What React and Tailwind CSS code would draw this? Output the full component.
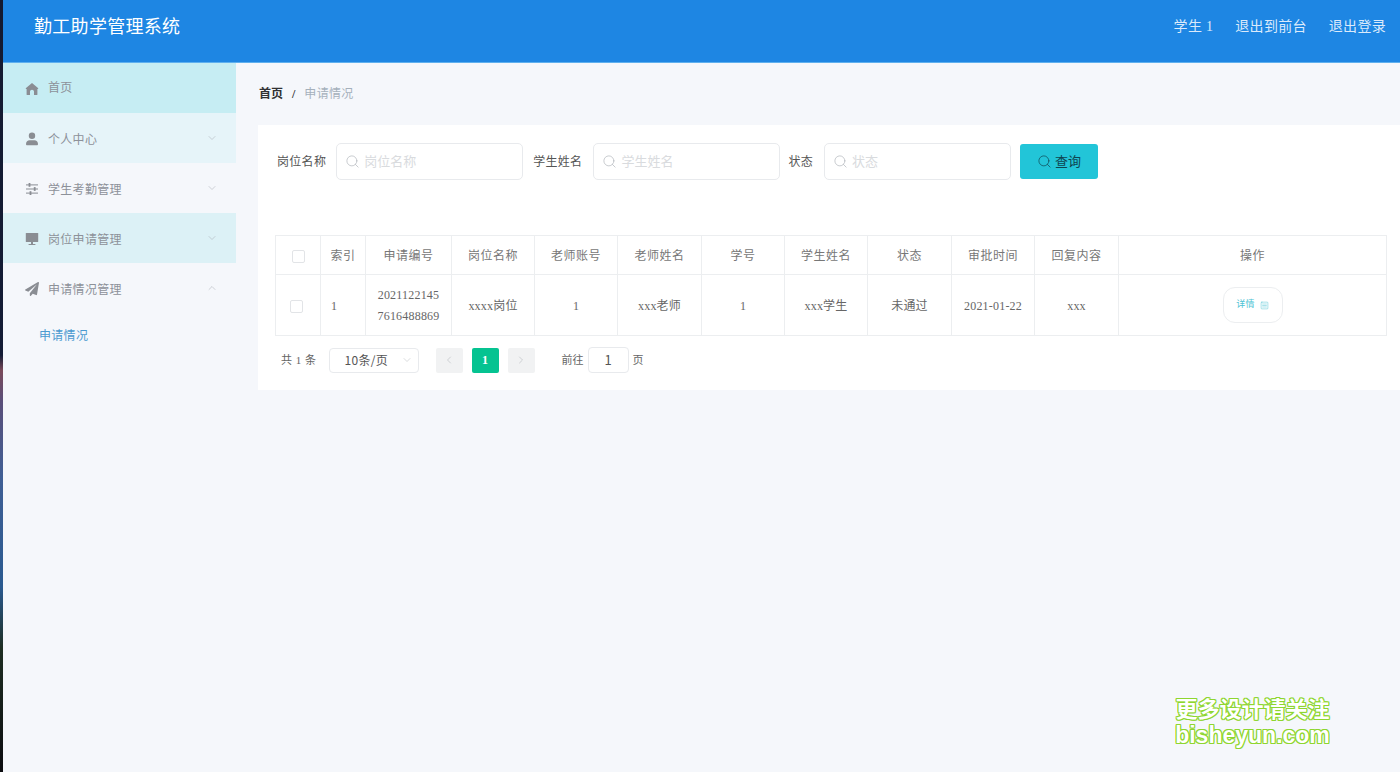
import React from "react";
import { FaPaperPlane } from "react-icons/fa";
import { ChevronDown, ChevronUp, ChevronLeft, ChevronRight, Search, SquareMenu } from "lucide-react";

const font = "font-['Liberation_Serif','Noto_Sans_CJK_SC',serif]";

const HomeIcon = (p) => (
  <svg viewBox="0 0 14 14" width="14" height="14" fill="currentColor" {...p}>
    <path d="M7 1 L13 6 C13.4 6.4 13.2 7 12.7 7 L12.4 7 L12.4 12.4 C12.4 12.8 12.1 13 11.8 13 L9 13 L9 9.6 C9 8.5 8.1 7.7 7 7.7 C5.9 7.7 5 8.5 5 9.6 L5 13 L2.2 13 C1.9 13 1.6 12.8 1.6 12.4 L1.6 7 L1.3 7 C0.8 7 0.6 6.4 1 6 Z" />
  </svg>
);
const UserIcon = (p) => (
  <svg viewBox="0 0 14 14" width="14" height="14" fill="currentColor" {...p}>
    <circle cx="7" cy="3.8" r="3.2" />
    <path d="M1 12 C1 9.6 2.6 8.2 4.6 8.2 L9.4 8.2 C11.4 8.2 13 9.6 13 12 C13 12.8 12.5 13.3 11.8 13.3 L2.2 13.3 C1.5 13.3 1 12.8 1 12 Z" />
  </svg>
);
const SliderIcon = (p) => (
  <svg viewBox="0 0 14 14" width="14" height="14" fill="currentColor" {...p}>
    <rect x="1" y="2.4" width="12" height="1" />
    <rect x="1" y="6.5" width="12" height="1" />
    <rect x="1" y="10.6" width="12" height="1" />
    <rect x="3.6" y="1" width="1.8" height="3.8" />
    <rect x="8.8" y="5.1" width="1.8" height="3.8" />
    <rect x="4.6" y="9.2" width="1.8" height="3.8" />
  </svg>
);
const DesktopIcon = (p) => (
  <svg viewBox="0 0 14 14" width="14" height="14" fill="currentColor" {...p}>
    <rect x="0.8" y="1" width="12.4" height="9" rx="0.5" />
    <rect x="6" y="10" width="2" height="2" />
    <rect x="3.6" y="12" width="6.8" height="1" />
  </svg>
);

const menu = [
  { label: "首页", Icon: HomeIcon, bg: "bg-[#c6edf3]", arrow: null, shift: "-mt-[2px]" },
  { label: "个人中心", Icon: UserIcon, bg: "bg-[#e6f4f9]", arrow: "down", shift: "pt-[2px]" },
  { label: "学生考勤管理", Icon: SliderIcon, bg: "bg-[#f5f7fb]", arrow: "down", shift: "pt-[2px]" },
  { label: "岗位申请管理", Icon: DesktopIcon, bg: "bg-[#dcf1f6]", arrow: "down", shift: "pt-[2px]" },
  { label: "申请情况管理", Icon: FaPaperPlane, bg: "bg-[#f5f7fb]", arrow: "up", shift: "pt-[2px]" },
];

const headers = [
  ["索引", "w-[45px]"],
  ["申请编号", "w-[86px]"],
  ["岗位名称", "w-[83px]"],
  ["老师账号", "w-[83px]"],
  ["老师姓名", "w-[84px]"],
  ["学号", "w-[83px]"],
  ["学生姓名", "w-[83px]"],
  ["状态", "w-[84px]"],
  ["审批时间", "w-[83px]"],
  ["回复内容", "w-[84px]"],
  ["操作", ""],
];

const cells = ["xxxx岗位", "1", "xxx老师", "1", "xxx学生", "未通过", "2021-01-22", "xxx"];

function Field({ label, placeholder, labelClass }) {
  return (
    <div className="flex items-center">
      <span className={`text-[12px] tracking-[0.3px] text-[#555] ${labelClass}`}>{label}</span>
      <div className="w-[187px] h-[37px] flex items-center rounded-[5px] border border-[#e8eaed] bg-white pl-[8px]">
        <Search size={15} strokeWidth={1} className="text-[#a9adb3]" />
        <span className="ml-[4px] text-[13px] text-[#d9dbde]">{placeholder}</span>
      </div>
    </div>
  );
}

export default function App() {
  return (
    <div className={`flex w-[1400px] h-[772px] overflow-hidden relative bg-[#f5f7fb] ${font}`}>
      <div className="w-[3px] shrink-0 bg-[linear-gradient(180deg,#141a30_0%,#141c35_46%,#7a4a5a_48%,#5a4f7a_52%,#3f5f95_62%,#2a5a90_76%,#1e2e22_84%,#0c0c10_100%)]" />
      <div className="flex-1 flex flex-col min-w-0">
        <header className="h-[63px] shrink-0 flex items-center justify-between bg-[#1e86e3] border-b border-[#5fb0ee] pl-[31px] pr-[14px] pb-[8px]">
          <div className="text-[18px] tracking-[0.3px] text-white">勤工助学管理系统</div>
          <div className="flex gap-[22px] mb-[2px] text-[14px] tracking-[0.3px] text-[#dbeafb]">
            <span>学生 1</span>
            <span>退出到前台</span>
            <span>退出登录</span>
          </div>
        </header>

        <div className="flex-1 flex min-h-0">
          <aside className="w-[233px] shrink-0 bg-[#f5f7fb]">
            {menu.map(({ label, Icon, bg, arrow, shift }) => (
              <div key={label} className={`h-[50px] pt-[2px] ${bg} flex items-center pl-[22px] pr-[18px] text-[#8d9199]`}>
                <Icon size={14} className="shrink-0 text-[#8a8d93]" />
                <span className={`ml-[9px] text-[12px] tracking-[0.3px] flex-1 ${shift}`}>{label}</span>
                {arrow === "down" && <ChevronDown size={12} strokeWidth={1} className="text-[#a5a9b0] -translate-y-px" />}
                {arrow === "up" && <ChevronUp size={12} strokeWidth={1} className="text-[#a5a9b0] -translate-y-px" />}
              </div>
            ))}
            <div className="h-[45px] flex items-center pl-[36px] text-[12px] tracking-[0.3px] text-[#4b9ad0]">申请情况</div>
          </aside>

          <main className="flex-1 min-w-0 pl-[22px]">
            <div className="h-[62px] flex items-center pl-px text-[12px]">
              <span className="font-bold text-[#303133]">首页</span>
              <span className="mx-[9px] font-bold text-[#303133]">/</span>
              <span className="text-[#a5b0bb] tracking-[0.3px]">申请情况</span>
            </div>

            <section className="h-[265px] bg-white pl-[18px] pr-[13px] pt-[18px]">
              <div className="flex items-center h-[37px]">
                <Field label="岗位名称" placeholder="岗位名称" labelClass="ml-px mr-[10px]" />
                <Field label="学生姓名" placeholder="学生姓名" labelClass="ml-[10px] mr-[11px]" />
                <Field label="状态" placeholder="状态" labelClass="ml-[8px] mr-[11px]" />
                <button className="ml-[9px] w-[78px] h-[35px] flex items-center justify-center gap-[3px] rounded-[3px] bg-[#22c5d8] text-[13px] text-[#0f4450]">
                  <Search size={15} strokeWidth={1.1} />
                  查询
                </button>
              </div>

              <table className="mt-[55px] -ml-px w-[1112px] table-fixed border-collapse border border-[#eceef0] text-[12px] tracking-[0.2px] text-[#666]">
                <thead>
                  <tr className="h-[39px]">
                    <th className="w-[45px] border border-[#eceef0] font-normal">
                      <span className="inline-block align-middle size-[13px] rounded-[2px] border border-[#e2e4e7]" />
                    </th>
                    {headers.map(([t, w]) => (
                      <th key={t} className={`${w} pt-px border border-[#eceef0] font-normal text-[#777] tracking-[0.5px]`}>{t}</th>
                    ))}
                  </tr>
                </thead>
                <tbody>
                  <tr className="h-[61px] text-center">
                    <td className="border border-[#eceef0] pr-[3px]">
                      <span className="inline-block align-middle size-[13px] rounded-[2px] border border-[#e2e4e7]" />
                    </td>
                    <td className="pt-px border border-[#eceef0] text-left pl-[10px]">1</td>
                    <td className="pt-px border border-[#eceef0] leading-[21px]">2021122145<br />7616488869</td>
                    {cells.map((c, i) => (
                      <td key={i} className="pt-px border border-[#eceef0]">{c}</td>
                    ))}
                    <td className="border border-[#eceef0]">
                      <span className="inline-flex items-center justify-center gap-[5px] w-[60px] h-[36px] rounded-[12px] border border-[#eceef0] text-[9px] text-[#4fc3d4] align-middle">
                        详情
                        <SquareMenu size={9} strokeWidth={1.3} />
                      </span>
                    </td>
                  </tr>
                </tbody>
              </table>

              <div className="mt-[11px] flex items-center h-[26px] pl-[5px] text-[11px] text-[#666]">
                <span className="tracking-[0.5px]">共 1 条</span>
                <div className="ml-[12px] w-[90px] h-[25px] flex items-center rounded-[4px] border border-[#e8eaed] pl-[15px] pr-[5px] text-[12px] tracking-[0.3px] text-[#555] font-['Noto_Sans_CJK_SC',sans-serif]">
                  <span className="flex-1">10条/页</span>
                  <ChevronDown size={12} strokeWidth={1} className="text-[#b5b8bd]" />
                </div>
                <div className="ml-[17px] w-[27px] h-[25px] flex items-center justify-center rounded-[2px] bg-[#f1f2f3] text-[#b5b8bd]">
                  <ChevronLeft size={12} strokeWidth={1.2} />
                </div>
                <div className="ml-[9px] w-[27px] h-[25px] flex items-center justify-center rounded-[2px] bg-[#05c391] text-white font-bold text-[12px]">1</div>
                <div className="ml-[9px] w-[27px] h-[25px] flex items-center justify-center rounded-[2px] bg-[#f1f2f3] text-[#b5b8bd]">
                  <ChevronRight size={12} strokeWidth={1.2} />
                </div>
                <span className="ml-[27px]">前往</span>
                <div className="ml-[4px] w-[41px] h-[26px] flex items-center justify-center rounded-[4px] border border-[#e8eaed] text-[13px] text-[#555] font-['Noto_Sans_CJK_SC',sans-serif]">1</div>
                <span className="ml-[4px]">页</span>
              </div>
            </section>
          </main>
        </div>
      </div>

      <div className="absolute left-[1174px] top-[693px] w-[157px] text-center font-['Noto_Sans_CJK_SC',sans-serif] font-bold text-white [text-shadow:-1px_-1px_0_#8ed62f,1px_-1px_0_#8ed62f,-1px_1px_0_#8ed62f,1px_1px_0_#8ed62f,0_-1px_0_#8ed62f,0_1px_0_#8ed62f,-1px_0_0_#8ed62f,1px_0_0_#8ed62f]">
        <div className="text-[22px] leading-[28px] whitespace-nowrap">更多设计请关注</div>
        <div className="text-[23px] leading-[28px] font-['Liberation_Sans',sans-serif]">bisheyun.com</div>
      </div>
    </div>
  );
}
